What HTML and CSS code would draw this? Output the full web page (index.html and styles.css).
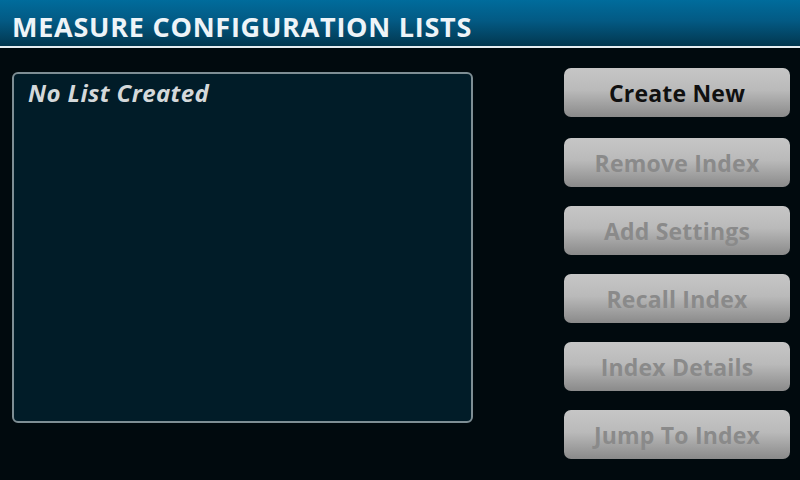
FILE: index.html
```html
<!DOCTYPE html>
<html>
<head>
<meta charset="utf-8">
<link rel="stylesheet" href="styles.css">
</head>
<body>
<header class="title-bar">
  <h1 class="title">MEASURE CONFIGURATION LISTS</h1>
</header>
<main class="content">
  <section class="list-panel">
    <p class="empty">No List Created</p>
  </section>
  <nav class="actions">
    <button class="btn active">Create New</button>
    <button class="btn disabled">Remove Index</button>
    <button class="btn disabled">Add Settings</button>
    <button class="btn disabled">Recall Index</button>
    <button class="btn disabled">Index Details</button>
    <button class="btn disabled">Jump To Index</button>
  </nav>
</main>
</body>
</html>
```

FILE: styles.css
```css
html, body {
  margin: 0;
  padding: 0;
  width: 800px;
  height: 480px;
  overflow: hidden;
  background: #010a0e;
  font-family: "Open Sans", "DejaVu Sans", sans-serif;
}
.title-bar {
  height: 46px;
  background: linear-gradient(to bottom, #006c9c 0%, #035a84 45%, #02374f 100%);
  border-bottom: 2px solid #e6eef2;
  display: flex;
  align-items: center;
  padding-left: 12px;
}
.title {
  margin: 0;
  font-size: 27px;
  font-weight: 700;
  color: #eef4f8;
  letter-spacing: 0.75px;
  line-height: 1;
  padding-top: 6px;
}
.content {
  display: flex;
  padding: 20px 10px 0 12px;
}
.list-panel {
  margin-top: 4px;
  width: 457px;
  height: 347px;
  border: 2px solid #7e8e94;
  border-radius: 6px;
  background: #011c28;
}
.empty {
  margin: 2px 0 0 14px;
  font-size: 24px;
  font-weight: 700;
  font-style: italic;
  color: #d4d8da;
  letter-spacing: 0.4px;
}
.actions {
  margin-left: auto;
  display: flex;
  flex-direction: column;
  gap: 19px;
}
.btn {
  width: 226px;
  height: 49px;
  border: none;
  border-radius: 7px;
  background: linear-gradient(to bottom, #c6c6c6 0%, #bababa 45%, #8a8a8a 100%);
  font-family: "Open Sans", "DejaVu Sans", sans-serif;
  font-size: 23px;
  font-weight: 700;
  letter-spacing: 0.2px;
  padding: 0;
}
.btn.active { color: #101010; margin-bottom: 2px; }
.btn.disabled { color: #8a8a8a; }
```
